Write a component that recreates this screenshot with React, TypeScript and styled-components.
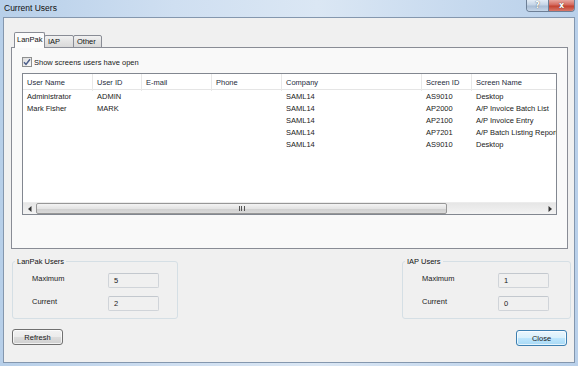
import React from "react";
import styled, { createGlobalStyle } from "styled-components";

const Global = createGlobalStyle`
  html, body { margin: 0; padding: 0; width: 578px; height: 366px; overflow: hidden; background: #c5d8ec; }
  * { box-sizing: border-box; }
`;

const FONT = `"Liberation Sans", Arial, sans-serif`;

const Window = styled.div`
  width: 578px;
  height: 366px;
  display: flex;
  flex-direction: column;
  padding: 0 3px 3px 3px;
  background: linear-gradient(to right, #b7cfe9 0%, #cfdff1 30%, #dbe7f4 55%, #c6d9ee 80%, #b9d0ea 100%);
  font-family: ${FONT};
  font-size: 7.5px;
  color: #1a1a1a;
`;

const TitleBar = styled.div`
  height: 17px;
  display: flex;
  align-items: flex-start;
`;

const Title = styled.div`
  font-size: 8.5px;
  line-height: 16px;
  padding-left: 1px;
  color: #111;
  flex: 1;
`;

const CaptionGroup = styled.div`
  display: flex;
  height: 12px;
  border: 1px solid #6d7f96;
  border-top: none;
  border-radius: 0 0 4px 4px;
  overflow: hidden;
`;

const CaptionBtn = styled.div<{ $close?: boolean; $w: number }>`
  width: ${(p) => p.$w}px;
  height: 11px;
  display: flex;
  align-items: center;
  justify-content: center;
  font-family: "DejaVu Sans", sans-serif;
  font-weight: bold;
  font-size: 8px;
  color: #fff;
  text-shadow: 0 0 1px #333;
  background: ${(p) =>
    p.$close
      ? "linear-gradient(#e7a79f, #d4685c 45%, #c3422f 55%, #d9786a)"
      : "linear-gradient(#e3ecf6, #c4d4e6 45%, #a9bdd5 55%, #c6d6e8)"};
  & + & { border-left: 1px solid #6d7f96; }
`;

const Client = styled.div`
  flex: 1;
  background: #f0f0f0;
  border: 1px solid #8497ae;
  display: flex;
  flex-direction: column;
  padding: 14px 3px 0 7px;
`;

const TabStrip = styled.div`
  display: flex;
  align-items: flex-end;
  height: 16px;
  padding-left: 3px;
  position: relative;
  z-index: 1;
`;

const Tab = styled.div<{ $active?: boolean; $w: number }>`
  width: ${(p) => p.$w}px;
  height: ${(p) => (p.$active ? 16 : 13)}px;
  border: 1px solid #898c95;
  border-bottom: ${(p) => (p.$active ? "none" : "1px solid #898c95")};
  border-radius: 2px 2px 0 0;
  background: ${(p) => (p.$active ? "#fcfcfc" : "linear-gradient(#f2f2f2, #e3e3e3 50%, #d9d9d9)")};
  padding-left: ${(p) => (p.$active ? 2 : 3)}px;
  line-height: ${(p) => (p.$active ? 14 : 11)}px;
  margin-left: -1px;
  white-space: nowrap;
  color: #111;
  &:first-child { margin-left: 0; }
`;

const Panel = styled.div`
  height: 202px;
  margin: -1px 3px 0 0;
  border: 1px solid #898c95;
  background: #f9f9f9;
  padding: 9px 10px 0 10px;
  display: flex;
  flex-direction: column;
`;

const CheckRow = styled.div`
  display: flex;
  align-items: center;
  gap: 2px;
  height: 10px;
`;

const CheckBox = styled.span`
  width: 10px;
  height: 10px;
  border: 1px solid #8e8f8f;
  background: linear-gradient(135deg, #dcdcdc, #fbfbfb);
  display: flex;
  align-items: center;
  justify-content: center;
`;

const ListView = styled.div`
  margin-top: 6px;
  height: 142px;
  border: 1px solid #828790;
  background: #fff;
  display: flex;
  flex-direction: column;
  overflow: hidden;
`;

const COLS = "70px 49px 70px 70px 140px 50px 110px";

const HeaderRow = styled.div`
  display: grid;
  grid-template-columns: ${COLS};
  height: 16px;
  border-bottom: 1px solid #e5e5e5;
  background: #fff;
  white-space: nowrap;
`;

const HeaderCell = styled.div`
  padding-left: 4px;
  line-height: 17px;
  color: #1e2b3c;
  border-right: 1px solid #e8e8e8;
`;

const Rows = styled.div`
  flex: 1;
  padding-top: 1px;
`;

const Row = styled.div`
  display: grid;
  grid-template-columns: ${COLS};
  height: 12px;
  white-space: nowrap;
`;

const Cell = styled.div`
  padding-left: 4px;
  line-height: 12px;
`;

const HScroll = styled.div`
  height: 12px;
  display: flex;
  align-items: stretch;
  background: linear-gradient(#e6e6e6, #f3f3f3);
  border-top: 1px solid #ececec;
`;

const Arrow = styled.div`
  width: 13px;
  display: flex;
  align-items: center;
  justify-content: center;
`;

const Thumb = styled.div<{ $w: number }>`
  width: ${(p) => p.$w}px;
  border: 1px solid #979797;
  border-radius: 2px;
  background: linear-gradient(#f3f3f3, #e4e4e4 50%, #cfcfcf 51%, #dadada);
  display: flex;
  align-items: center;
  justify-content: center;
`;

const Grip = styled.div`
  width: 6px;
  height: 5px;
  border-left: 1px solid #555;
  border-right: 1px solid #555;
  position: relative;
  &::after {
    content: "";
    position: absolute;
    left: 1.5px;
    top: 0;
    width: 1px;
    height: 5px;
    background: #555;
  }
`;

const Track = styled.div`
  flex: 1;
`;

const GroupsRow = styled.div`
  display: flex;
  justify-content: space-between;
  margin-top: 8px;
  padding-left: 1px;
`;

const Group = styled.fieldset<{ $w: number }>`
  width: ${(p) => p.$w}px;
  height: 62px;
  margin: 0;
  border: 1px solid #d5dfe5;
  border-radius: 3px;
  padding: 7px 0 0 19px;
  display: grid;
  grid-template-columns: 76px 51px;
  grid-auto-rows: 15px;
  row-gap: 8px;
  align-content: start;
`;

const Legend = styled.legend`
  padding: 0 2px;
  margin-left: -17px;
  line-height: 9px;
  color: #111;
`;

const FieldLabel = styled.div`
  line-height: 12px;
`;

const ValueBox = styled.div`
  border: 1px solid #d0d4d9;
  border-top-color: #c3c8ce;
  border-radius: 2px;
  background: #f0f0f0;
  padding-left: 5px;
  line-height: 13px;
`;

const ButtonsRow = styled.div`
  display: flex;
  justify-content: space-between;
  align-items: flex-start;
  margin-top: 10px;
  padding: 0 4px 0 1px;
`;

const Button = styled.div<{ $default?: boolean }>`
  width: 51px;
  height: 16px;
  margin-top: ${(p) => (p.$default ? 1 : 0)}px;
  border: 1px solid ${(p) => (p.$default ? "#3c7fb1" : "#707070")};
  border-radius: 3px;
  background: ${(p) =>
    p.$default
      ? "linear-gradient(#eaf6fd, #d9f0fc 50%, #bee6fd 51%, #a7d9f5)"
      : "linear-gradient(#f2f2f2, #ebebeb 50%, #dddddd 51%, #cfcfcf)"};
  box-shadow: inset 0 0 0 1px rgba(255, 255, 255, 0.7);
  display: flex;
  align-items: center;
  justify-content: center;
  font-size: 7.5px;
`;

type Rec = string[];
const rows: Rec[] = [
  ["Administrator", "ADMIN", "", "", "SAML14", "AS9010", "Desktop"],
  ["Mark Fisher", "MARK", "", "", "SAML14", "AP2000", "A/P Invoice Batch List"],
  ["", "", "", "", "SAML14", "AP2100", "A/P Invoice Entry"],
  ["", "", "", "", "SAML14", "AP7201", "A/P Batch Listing Report"],
  ["", "", "", "", "SAML14", "AS9010", "Desktop"],
];
const headers = ["User Name", "User ID", "E-mail", "Phone", "Company", "Screen ID", "Screen Name"];

function UsersGroup({ title, w, max, cur }: { title: string; w: number; max: string; cur: string }) {
  return (
    <Group $w={w}>
      <Legend>{title}</Legend>
      <FieldLabel>Maximum</FieldLabel>
      <ValueBox>{max}</ValueBox>
      <FieldLabel>Current</FieldLabel>
      <ValueBox>{cur}</ValueBox>
    </Group>
  );
}

export default function App() {
  return (
    <>
      <Global />
      <Window>
        <TitleBar>
          <Title>Current Users</Title>
          <CaptionGroup>
            <CaptionBtn $w={21}>?</CaptionBtn>
            <CaptionBtn $w={26} $close>
              x
            </CaptionBtn>
          </CaptionGroup>
        </TitleBar>
        <Client>
          <TabStrip>
            <Tab $active $w={31}>LanPak</Tab>
            <Tab $w={30}>IAP</Tab>
            <Tab $w={29}>Other</Tab>
          </TabStrip>
          <Panel>
            <CheckRow>
              <CheckBox>
                <svg width="8" height="8" viewBox="0 0 8 8">
                  <path d="M1 4.2 L3 6.4 L7 1.2" fill="none" stroke="#4b5d8a" strokeWidth="1.5" />
                </svg>
              </CheckBox>
              <span>Show screens users have open</span>
            </CheckRow>
            <ListView>
              <HeaderRow>
                {headers.map((h) => (
                  <HeaderCell key={h}>{h}</HeaderCell>
                ))}
              </HeaderRow>
              <Rows>
                {rows.map((r, i) => (
                  <Row key={i}>
                    {r.map((c, j) => (
                      <Cell key={j}>{c}</Cell>
                    ))}
                  </Row>
                ))}
              </Rows>
              <HScroll>
                <Arrow>
                  <svg width="4" height="6" viewBox="0 0 4 6">
                    <path d="M3.5 0 L0 3 L3.5 6 Z" fill="#333" />
                  </svg>
                </Arrow>
                <Thumb $w={411}>
                  <Grip />
                </Thumb>
                <Track />
                <Arrow>
                  <svg width="4" height="6" viewBox="0 0 4 6">
                    <path d="M0.5 0 L4 3 L0.5 6 Z" fill="#333" />
                  </svg>
                </Arrow>
              </HScroll>
            </ListView>
          </Panel>
          <GroupsRow>
            <UsersGroup title="LanPak Users" w={166} max="5" cur="2" />
            <UsersGroup title="IAP Users" w={169} max="1" cur="0" />
          </GroupsRow>
          <ButtonsRow>
            <Button>Refresh</Button>
            <Button $default>Close</Button>
          </ButtonsRow>
        </Client>
      </Window>
    </>
  );
}
